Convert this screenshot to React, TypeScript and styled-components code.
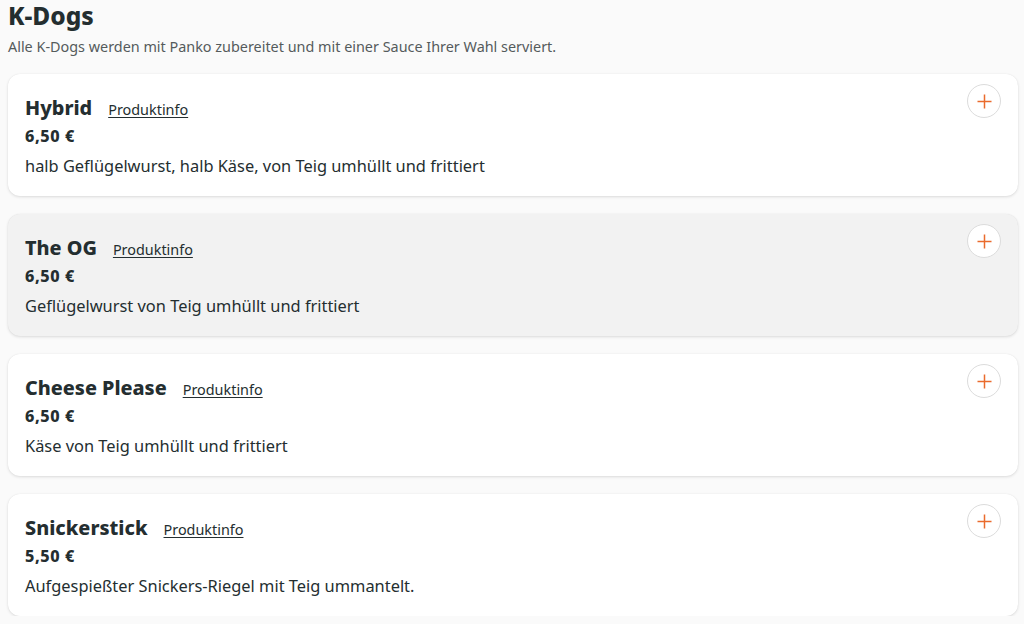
import React from "react";
import styled, { createGlobalStyle } from "styled-components";

const Global = createGlobalStyle`
  html, body { margin: 0; padding: 0; background: #fafafa; }
  body { font-family: "Noto Sans", "Open Sans", sans-serif; color: #242e30; }
`;

const Page = styled.div`
  padding: 0 6px 0 8px;
  display: flex;
  flex-direction: column;
`;

const Heading = styled.h2`
  margin: 0;
  font-family: "Noto Sans", sans-serif;
  font-size: 24.5px;
  line-height: 32px;
  font-weight: 800;
  color: #242e30;
`;

const Intro = styled.p`
  margin: 5px 0 0;
  font-size: 14.4px;
  line-height: 20px;
  color: #555b5c;
`;

const List = styled.div`
  margin-top: 17px;
  display: flex;
  flex-direction: column;
  gap: 18px;
`;

const Card = styled.div<{ $hover?: boolean }>`
  display: flex;
  align-items: flex-start;
  padding: 20px 17px 18px 17px;
  border-radius: 12px;
  background: ${(p) => (p.$hover ? "#f2f2f2" : "#ffffff")};
  box-shadow: 0 1px 3px rgba(0, 0, 0, 0.12), 0 0 1px rgba(0, 0, 0, 0.08);
`;

const Content = styled.div`
  flex: 1;
  display: flex;
  flex-direction: column;
`;

const TitleRow = styled.div`
  display: flex;
  align-items: baseline;
  gap: 16px;
  height: 28px;
`;

const Name = styled.span`
  font-family: "Noto Sans", sans-serif;
  font-size: 19.8px;
  line-height: 28px;
  font-weight: 800;
  color: #242e30;
`;

const Info = styled.a`
  font-size: 14.4px;
  line-height: 20px;
  color: #242e30;
  text-decoration: underline;
  text-underline-offset: 2px;
`;

const Price = styled.div`
  margin-top: 2px;
  font-family: "Noto Sans", sans-serif;
  font-size: 16.2px;
  line-height: 24px;
  font-weight: 800;
  letter-spacing: 0.6px;
  color: #242e30;
`;

const Desc = styled.div`
  margin-top: 6px;
  font-size: 16.4px;
  line-height: 24px;
  color: #242e30;
`;

const AddButton = styled.button`
  margin-top: -10px;
  width: 34px;
  height: 34px;
  border-radius: 50%;
  border: 1px solid #dcdcdc;
  background: #ffffff;
  display: flex;
  align-items: center;
  justify-content: center;
  padding: 0;
  flex-shrink: 0;
`;

const items = [
  { name: "Hybrid", price: "6,50 €", desc: "halb Geflügelwurst, halb Käse, von Teig umhüllt und frittiert" },
  { name: "The OG", price: "6,50 €", desc: "Geflügelwurst von Teig umhüllt und frittiert", hover: true },
  { name: "Cheese Please", price: "6,50 €", desc: "Käse von Teig umhüllt und frittiert" },
  { name: "Snickerstick", price: "5,50 €", desc: "Aufgespießter Snickers-Riegel mit Teig ummantelt." },
];

const Plus = () => (
  <svg width="15" height="15" viewBox="0 0 15 15">
    <path d="M7.5 0.5v14M0.5 7.5h14" stroke="#ea6b2d" strokeWidth="1.5" fill="none" />
  </svg>
);

export default function App() {
  return (
    <>
      <Global />
      <Page>
        <Heading>K-Dogs</Heading>
        <Intro>Alle K-Dogs werden mit Panko zubereitet und mit einer Sauce Ihrer Wahl serviert.</Intro>
        <List>
          {items.map((it) => (
            <Card key={it.name} $hover={it.hover}>
              <Content>
                <TitleRow>
                  <Name>{it.name}</Name>
                  <Info href="#">Produktinfo</Info>
                </TitleRow>
                <Price>{it.price}</Price>
                <Desc>{it.desc}</Desc>
              </Content>
              <AddButton aria-label="Hinzufügen">
                <Plus />
              </AddButton>
            </Card>
          ))}
        </List>
      </Page>
    </>
  );
}
